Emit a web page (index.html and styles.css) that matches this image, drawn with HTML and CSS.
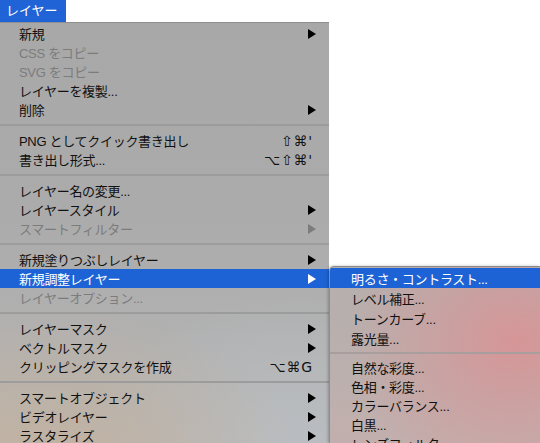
FILE: index.html
```html
<!DOCTYPE html>
<html lang="ja">
<head>
<meta charset="utf-8">
<title>レイヤー</title>
<link rel="stylesheet" href="styles.css">
</head>
<body>
<div class="menubar">
  <div class="title">レイヤー</div>
</div>
<div class="stage">
  <div class="menu main">
    <div class="item"><span class="label">新規</span><span class="arrow"></span></div>
    <div class="item off"><span class="label">CSS をコピー</span></div>
    <div class="item off"><span class="label">SVG をコピー</span></div>
    <div class="item"><span class="label">レイヤーを複製...</span></div>
    <div class="item"><span class="label">削除</span><span class="arrow"></span></div>
    <div class="sep"></div>
    <div class="item"><span class="label">PNG としてクイック書き出し</span><span class="key">⇧⌘'</span></div>
    <div class="item"><span class="label">書き出し形式...</span><span class="key">⌥⇧⌘'</span></div>
    <div class="sep"></div>
    <div class="item"><span class="label">レイヤー名の変更...</span></div>
    <div class="item"><span class="label">レイヤースタイル</span><span class="arrow"></span></div>
    <div class="item off"><span class="label">スマートフィルター</span><span class="arrow"></span></div>
    <div class="sep"></div>
    <div class="item"><span class="label">新規塗りつぶしレイヤー</span><span class="arrow"></span></div>
    <div class="item hl"><span class="label">新規調整レイヤー</span><span class="arrow"></span></div>
    <div class="item off"><span class="label">レイヤーオプション...</span></div>
    <div class="sep"></div>
    <div class="item"><span class="label">レイヤーマスク</span><span class="arrow"></span></div>
    <div class="item"><span class="label">ベクトルマスク</span><span class="arrow"></span></div>
    <div class="item"><span class="label">クリッピングマスクを作成</span><span class="key">⌥⌘G</span></div>
    <div class="sep"></div>
    <div class="item"><span class="label">スマートオブジェクト</span><span class="arrow"></span></div>
    <div class="item"><span class="label">ビデオレイヤー</span><span class="arrow"></span></div>
    <div class="item"><span class="label">ラスタライズ</span><span class="arrow"></span></div>
  </div>
  <div class="menu sub">
    <div class="item hl"><span class="label">明るさ・コントラスト...</span></div>
    <div class="item"><span class="label">レベル補正...</span></div>
    <div class="item"><span class="label">トーンカーブ...</span></div>
    <div class="item"><span class="label">露光量...</span></div>
    <div class="sep"></div>
    <div class="item low"><span class="label">自然な彩度...</span></div>
    <div class="item low"><span class="label">色相・彩度...</span></div>
    <div class="item low"><span class="label">カラーバランス...</span></div>
    <div class="item low"><span class="label">白黒...</span></div>
    <div class="item low"><span class="label">レンズフィルター...</span></div>
  </div>
</div>
</body>
</html>
```
FILE: styles.css
```css
html, body {
  margin: 0;
  padding: 0;
  background: #ffffff;
  width: 540px;
  height: 443px;
  overflow: hidden;
}
body {
  font-family: "Liberation Sans", "Noto Sans CJK JP", sans-serif;
  font-size: 13px;
  letter-spacing: -0.3px;
  color: #111111;
}
.menubar {
  height: 22px;
  display: flex;
}
.title {
  background: #2063d6;
  color: #ffffff;
  padding: 0 8px 0 6px;
  line-height: 22px;
  font-size: 13px;
  letter-spacing: 0;
}
.stage {
  display: flex;
  align-items: flex-start;
}
.menu {
  display: flex;
  flex-direction: column;
  overflow: hidden;
  box-sizing: border-box;
}
.main {
  width: 329px;
  height: 421px;
  flex-shrink: 0;
  border-top: 1px solid #8f8f8f;
  padding-top: 1px;
  background:
    radial-gradient(ellipse 260px 160px at 40px 440px, rgba(196, 178, 158, 0.85), rgba(196, 178, 158, 0) 100%),
    radial-gradient(ellipse 220px 160px at 300px 430px, rgba(186, 192, 198, 0.8), rgba(186, 192, 198, 0) 100%),
    linear-gradient(180deg, #a8a8a8 0%, #ababab 45%, #b1b1b1 75%, #b6b4b2 100%);
}
.item {
  height: 19px;
  flex-shrink: 0;
  display: flex;
  align-items: center;
  padding: 0 13px 0 19px;
  white-space: nowrap;
}
.label {
  flex: 1;
}
.off {
  color: #7c7c7c;
}
.hl {
  background: #1e63d5;
  color: #ffffff;
}
.key {
  font-family: "DejaVu Sans", "Liberation Sans", sans-serif;
  font-size: 14px;
  letter-spacing: 0.8px;
  padding-right: 3px;
}
.arrow {
  width: 0;
  height: 0;
  border-top: 5px solid transparent;
  border-bottom: 5px solid transparent;
  border-left: 8px solid #000000;
}
.off .arrow {
  border-left-color: #7c7c7c;
}
.hl .arrow {
  border-left-color: #ffffff;
}
.sep {
  height: 12px;
  flex-shrink: 0;
  display: flex;
  align-items: center;
}
.sep::before {
  content: "";
  flex: 1;
  height: 2px;
  background: #9c9c9c;
}
.sub {
  flex: 1;
  margin-top: 244px;
  height: 177px;
  border-top: 1px solid #8a8a8a;
  border-left: 1px solid #8e8e8e;
  border-top-left-radius: 5px;
  padding-top: 1px;
  box-shadow: -1px 0 3px rgba(0, 0, 0, 0.25);
  background:
    radial-gradient(ellipse 170px 140px at 185px 75px, rgba(216, 148, 150, 0.95), rgba(216, 148, 150, 0) 100%),
    linear-gradient(180deg, #b5afad 0%, #bbb0ae 60%, #c2afad 100%);
}
.sub .item {
  height: 20px;
  padding-left: 21px;
}
.sub .item.low {
  height: 19px;
}
.sub .sep {
  height: 10px;
}
.sub .sep::before {
  background: #a89e9d;
}
```
